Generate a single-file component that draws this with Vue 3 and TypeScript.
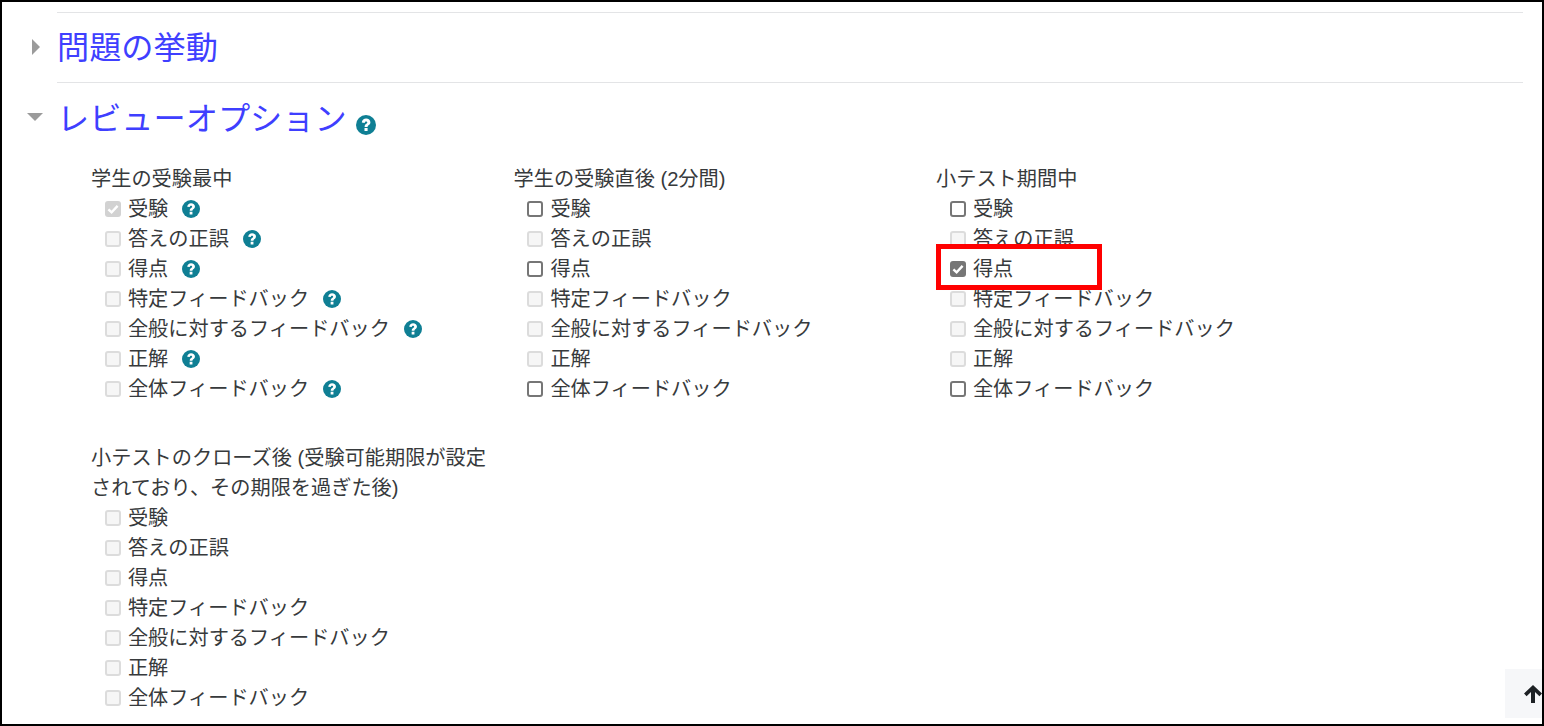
<script setup lang="ts">
interface Opt { label: string; state: 'on' | 'off' | 'dis' | 'dis-on'; help?: boolean }
interface Group { title: string[]; opts: Opt[] }
const names = ['受験', '答えの正誤', '得点', '特定フィードバック', '全般に対するフィードバック', '正解', '全体フィードバック']
const make = (states: Opt['state'][], help = false): Opt[] =>
  names.map((label, i) => ({ label, state: states[i], help }))
const groups: Group[] = [
  { title: ['学生の受験最中'], opts: make(['dis-on', 'dis', 'dis', 'dis', 'dis', 'dis', 'dis'], true) },
  { title: ['学生の受験直後 (2分間)'], opts: make(['off', 'dis', 'off', 'dis', 'dis', 'dis', 'off']) },
  { title: ['小テスト期間中'], opts: make(['off', 'dis', 'on', 'dis', 'dis', 'dis', 'off']) },
  { title: ['小テストのクローズ後 (受験可能期限が設定', 'されており、その期限を過ぎた後)'], opts: make(['dis', 'dis', 'dis', 'dis', 'dis', 'dis', 'dis']) },
]
</script>

<template>
  <div class="frame">
    <div class="section">
      <div class="head closed">
        <svg class="caret" width="12" height="18" viewBox="0 0 12 18"><path d="M2 1 L10 9 L2 17 Z" fill="#9b9b9b" /></svg>
        <h3 class="title">問題の挙動</h3>
      </div>
    </div>
    <div class="section">
      <div class="head open">
        <svg class="caret" width="18" height="10" viewBox="0 0 18 10"><path d="M1 1 L17 1 L9 9 Z" fill="#9b9b9b" /></svg>
        <h3 class="title">レビューオプション</h3>
        <span class="help big"><svg viewBox="0 0 20 20"><circle cx="10" cy="10" r="10" fill="#0f7f94" /><path d="M5.8 7.4 C6 4.9 7.9 3.5 10.1 3.5 C12.5 3.5 14.4 5 14.4 7.3 C14.4 10.1 11.6 10.1 11.6 12 L8.6 12 C8.6 8.9 11.3 9 11.3 7.6 C11.3 6.9 10.8 6.4 10 6.4 C9.2 6.4 8.8 7 8.6 7.9 Z M8.5 13.1 H11.6 V16.1 H8.5 Z" fill="#fff" /></svg></span>
      </div>
      <div class="grid">
        <div v-for="(g, gi) in groups" :key="gi" class="group">
          <div v-for="t in g.title" :key="t" class="title-line">{{ t }}</div>
          <div v-for="o in g.opts" :key="o.label" class="opt">
            <span class="box" :class="o.state">
              <svg v-if="o.state === 'on' || o.state === 'dis-on'" viewBox="0 0 16 16"><path d="M3.4 8.3 L6.6 11.4 L12.6 4.9" fill="none" stroke="#fff" stroke-width="2.4" /></svg>
            </span>
            <span class="label">{{ o.label }}</span>
            <span v-if="o.help" class="help"><svg viewBox="0 0 20 20"><circle cx="10" cy="10" r="10" fill="#0f7f94" /><path d="M5.8 7.4 C6 4.9 7.9 3.5 10.1 3.5 C12.5 3.5 14.4 5 14.4 7.3 C14.4 10.1 11.6 10.1 11.6 12 L8.6 12 C8.6 8.9 11.3 9 11.3 7.6 C11.3 6.9 10.8 6.4 10 6.4 C9.2 6.4 8.8 7 8.6 7.9 Z M8.5 13.1 H11.6 V16.1 H8.5 Z" fill="#fff" /></svg></span>
          </div>
        </div>
      </div>
    </div>
    <div class="highlight"></div>
    <div class="to-top">
      <svg width="18" height="18" viewBox="0 0 18 18"><path d="M9 0 L18 8.6 L15.4 11.2 L11 7 V18 H7 V7 L2.6 11.2 L0 8.6 Z" fill="#1d2125" /></svg>
    </div>
  </div>
</template>

<style>
html, body { margin: 0; background: #fff; }
</style>

<style scoped>
.frame {
  position: relative;
  box-sizing: border-box;
  width: 1544px;
  height: 726px;
  border: 2px solid #000;
  overflow: hidden;
  background: #fff;
  padding: 10px 19px 0 55px;
  font-family: "Liberation Sans", "Noto Sans CJK JP", sans-serif;
  color: #373a3c;
}
.section { border-top: 1px solid #e3e4e6; }
.head { position: relative; display: flex; align-items: center; }
.head.closed { height: 69px; }
.head.open { height: 71px; }
.caret { position: absolute; }
.closed .caret { left: -27px; top: 25px; }
.open .caret { left: -31px; top: 29px; }
.title { margin: 0; font-size: 32.2px; font-weight: 400; line-height: 40px; color: #3f3fff; }
.help { display: inline-flex; width: 18px; height: 18px; }
.help svg { width: 100%; height: 100%; }
.help.big { width: 20px; height: 20px; margin: 12px 0 0 9px; }
.grid {
  display: grid;
  grid-template-columns: repeat(3, 422.5px);
  row-gap: 39px;
  padding: 10px 0 0 34px;
}
.group { width: 400px; }
.title-line { font-size: 20.2px; line-height: 30px; }
.opt { display: flex; align-items: center; height: 30px; padding-left: 13.9px; font-size: 20.2px; }
.box {
  box-sizing: border-box;
  width: 16px;
  height: 16px;
  border-radius: 3px;
  margin-right: 7px;
  flex: none;
  display: inline-flex;
}
.box svg { width: 100%; height: 100%; }
.box.off { border: 2px solid #767676; background: #fff; }
.box.on { background: #767676; }
.box.dis { border: 2px solid #dcdcdc; background: #f6f6f6; }
.box.dis-on { background: #d2d2d2; }
.label { line-height: 30px; }
.help:not(.big) { margin-left: 14px; }
.highlight {
  position: absolute;
  left: 934px;
  top: 242px;
  width: 166px;
  height: 46px;
  box-sizing: border-box;
  border: 5px solid #f00;
}
.to-top {
  position: absolute;
  right: 0;
  bottom: 6px;
  width: 37px;
  height: 49px;
  background: #f6f7f9;
  display: flex;
  align-items: center;
  justify-content: flex-end;
}
</style>
